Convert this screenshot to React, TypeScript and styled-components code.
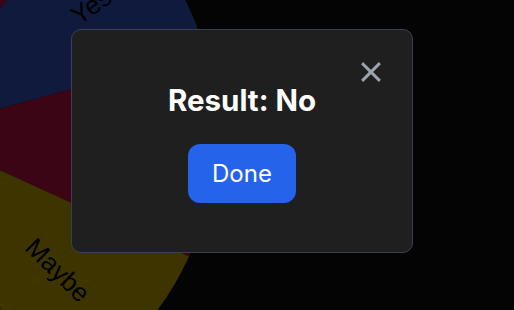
import React from "react";
import styled, { createGlobalStyle } from "styled-components";

const GlobalStyle = createGlobalStyle`
  html, body {
    margin: 0;
    padding: 0;
    background: #121212;
    overflow: hidden;
  }
  body {
    font-family: Inter, "Noto Sans", sans-serif;
  }
`;

const Page = styled.div`
  width: 100vw;
  height: 100vh;
  overflow: hidden;
  background: #121212;
`;

const WheelSvg = styled.svg`
  display: block;
  margin: -168px 0 0 -384px;
`;

const Overlay = styled.div`
  position: fixed;
  inset: 0;
  box-sizing: border-box;
  padding: 0 30px 29px 0;
  background: rgba(0, 0, 0, 0.75);
  display: flex;
  align-items: center;
  justify-content: center;
`;

const Modal = styled.div`
  box-sizing: border-box;
  width: 342px;
  padding: 32px 31px 49px;
  background: #1f1f1f;
  border: 1px solid #374151;
  border-radius: 10px;
  display: flex;
  flex-direction: column;
  align-items: center;
`;

const CloseRow = styled.div`
  align-self: stretch;
  display: flex;
  justify-content: flex-end;
`;

const CloseButton = styled.button`
  width: 20px;
  height: 20px;
  padding: 0;
  border: 0;
  background: none;
  color: #9ca3af;
  cursor: pointer;
  display: flex;
`;

const Title = styled.h2`
  margin: 0 0 26px;
  font-size: 29.5px;
  line-height: 36px;
  font-weight: 700;
  color: #ffffff;
`;

const DoneButton = styled.button`
  height: 59px;
  padding: 0 24px;
  border: 0;
  border-radius: 12px;
  background: #2563eb;
  color: #ffffff;
  font-family: inherit;
  font-size: 24px;
  cursor: pointer;
`;

const segments = [
  { label: "No", color: "#ec1454" },
  { label: "Yes", color: "#3c68f4" },
  { label: "No", color: "#ec1454" },
  { label: "Maybe", color: "#f4d000" },
  { label: "Yes", color: "#3c68f4" },
  { label: "No", color: "#ec1454" },
  { label: "Maybe", color: "#f4d000" },
  { label: "Yes", color: "#3c68f4" },
  { label: "Maybe", color: "#f4d000" },
];

const R = 300;
const START = -95.5;
const STEP = 360 / segments.length;

const rad = (d: number) => (d * Math.PI) / 180;

const Wheel = () => (
  <WheelSvg width={600} height={600} viewBox="-300 -300 600 600">
    {segments.map((s, i) => {
      const a1 = START + STEP * i;
      const a2 = a1 + STEP;
      const mid = a1 + STEP / 2;
      const d = `M0 0 L${R * Math.cos(rad(a1))} ${R * Math.sin(rad(a1))} A${R} ${R} 0 0 1 ${R * Math.cos(rad(a2))} ${R * Math.sin(rad(a2))} Z`;
      return (
        <g key={i}>
          <path d={d} fill={s.color} />
          <text
            transform={`rotate(${mid})`}
            x={237}
            y={8}
            textAnchor="end"
            fontSize={26}
            fontFamily="'Liberation Sans', Arial, sans-serif"
            fill="#000"
          >
            {s.label}
          </text>
        </g>
      );
    })}
  </WheelSvg>
);

export default function App() {
  return (
    <>
      <GlobalStyle />
      <Page>
        <Wheel />
      </Page>
      <Overlay>
        <Modal>
          <CloseRow>
            <CloseButton aria-label="Close">
              <svg width="20" height="20" viewBox="0 0 20 20" fill="none" stroke="currentColor" strokeWidth="3" strokeLinecap="square">
                <line x1="2.2" y1="2.2" x2="17.8" y2="17.8" />
                <line x1="17.8" y1="2.2" x2="2.2" y2="17.8" />
              </svg>
            </CloseButton>
          </CloseRow>
          <Title>Result: No</Title>
          <DoneButton>Done</DoneButton>
        </Modal>
      </Overlay>
    </>
  );
}
